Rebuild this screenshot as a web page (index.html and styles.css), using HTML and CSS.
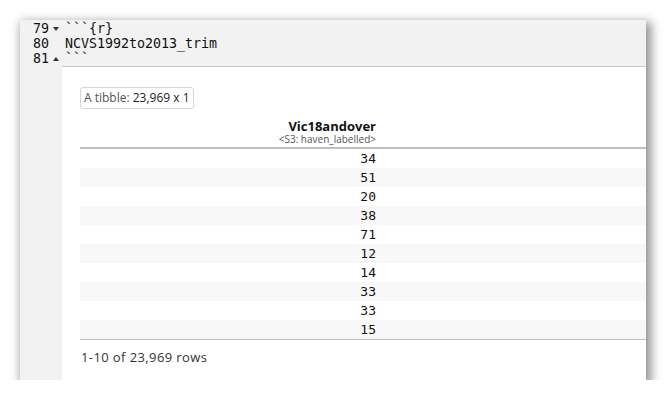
FILE: index.html
```html
<!DOCTYPE html>
<html>
<head>
<meta charset="utf-8">
<link rel="stylesheet" href="styles.css">
</head>
<body>
<div class="frame">
  <div class="code">
    <div class="line"><span class="ln">79<svg class="fold" width="6" height="4" viewBox="0 0 6 4"><path d="M0 0H6L3 4Z" fill="#333"/></svg></span><span class="src">```{r}</span></div>
    <div class="line"><span class="ln">80</span><span class="src">NCVS1992to2013_trim</span></div>
    <div class="line"><span class="ln">81<svg class="fold" width="6" height="4" viewBox="0 0 6 4"><path d="M0 4H6L3 0Z" fill="#333"/></svg></span><span class="src">```</span></div>
  </div>
  <div class="output">
    <div class="badge"><span class="muted">A tibble:</span> 23,969 x 1</div>
    <table class="tbl">
      <thead>
        <tr><th class="col"><div class="name">Vic18andover</div><div class="type">&lt;S3: haven_labelled&gt;</div></th><th class="fill"></th></tr>
      </thead>
      <tbody>
        <tr><td class="num">34</td><td></td></tr>
        <tr><td class="num">51</td><td></td></tr>
        <tr><td class="num">20</td><td></td></tr>
        <tr><td class="num">38</td><td></td></tr>
        <tr><td class="num">71</td><td></td></tr>
        <tr><td class="num">12</td><td></td></tr>
        <tr><td class="num">14</td><td></td></tr>
        <tr><td class="num">33</td><td></td></tr>
        <tr><td class="num">33</td><td></td></tr>
        <tr><td class="num">15</td><td></td></tr>
      </tbody>
    </table>
    <div class="footer">1-10 of 23,969 rows</div>
  </div>
</div>
</body>
</html>
```
FILE: styles.css
```css
html, body {
  margin: 0;
  padding: 0;
  background: #ffffff;
}

.frame {
  margin: 20px 0 0 20px;
  width: 626px;
  height: 360px;
  background: #f2f2f2;
  box-shadow: 3px 4px 10px 2px rgba(0, 0, 0, 0.45);
  overflow: hidden;
  display: flex;
  flex-direction: column;
}

.code {
  font-family: "DejaVu Sans Mono", "Liberation Mono", monospace;
  font-size: 13.3px;
  line-height: 15px;
  color: #111;
  padding-top: 1px;
}

.line {
  display: flex;
  height: 15px;
}

.ln {
  width: 32px;
  padding-left: 13px;
  display: flex;
  align-items: center;
  gap: 4px;
  color: #111;
}

.fold {
  display: block;
  margin-top: 1px;
}

.src {
  white-space: pre;
}

.output {
  flex: 1;
  margin-left: 42px;
  background: #ffffff;
  border-top: 1px solid #c8c8c8;
  padding: 20px 0 0 18px;
  overflow: hidden;
  font-family: "Open Sans", "Noto Sans", sans-serif;
}

.badge {
  display: block;
  width: max-content;
  border: 1px solid #d6d6d6;
  border-radius: 3px;
  padding: 0 3px;
  height: 20px;
  line-height: 20px;
  font-size: 12px;
  color: #222;
}

.muted {
  color: #555;
}

.tbl {
  width: 100%;
  border-collapse: collapse;
  margin-top: 10px;
}

.tbl th {
  padding: 0;
}

.col {
  width: 296px;
  text-align: right;
  color: #111;
  padding: 0 4px 3px 0 !important;
  border-bottom: 2px solid #bdbdbd;
  vertical-align: bottom;
}

.name {
  font-size: 13px;
  font-weight: 700;
  line-height: 15px;
}

.fill {
  border-bottom: 2px solid #bdbdbd;
}

.type {
  font-size: 10px;
  font-weight: 400;
  color: #555;
  line-height: 10px;
}

.tbl td {
  height: 19px;
  padding: 0;
}

.tbl tbody tr:nth-child(even) td {
  background: #f8f8f8;
}

.tbl tbody tr:last-child td {
  border-bottom: 1px solid #bdbdbd;
}

.num {
  text-align: right;
  padding-right: 4px !important;
  font-family: "DejaVu Sans Mono", "Liberation Mono", monospace;
  font-size: 13px;
  color: #111;
}

.footer {
  font-size: 13px;
  color: #333;
  padding: 8px 0 0 1px;
  letter-spacing: 0.4px;
}
```
